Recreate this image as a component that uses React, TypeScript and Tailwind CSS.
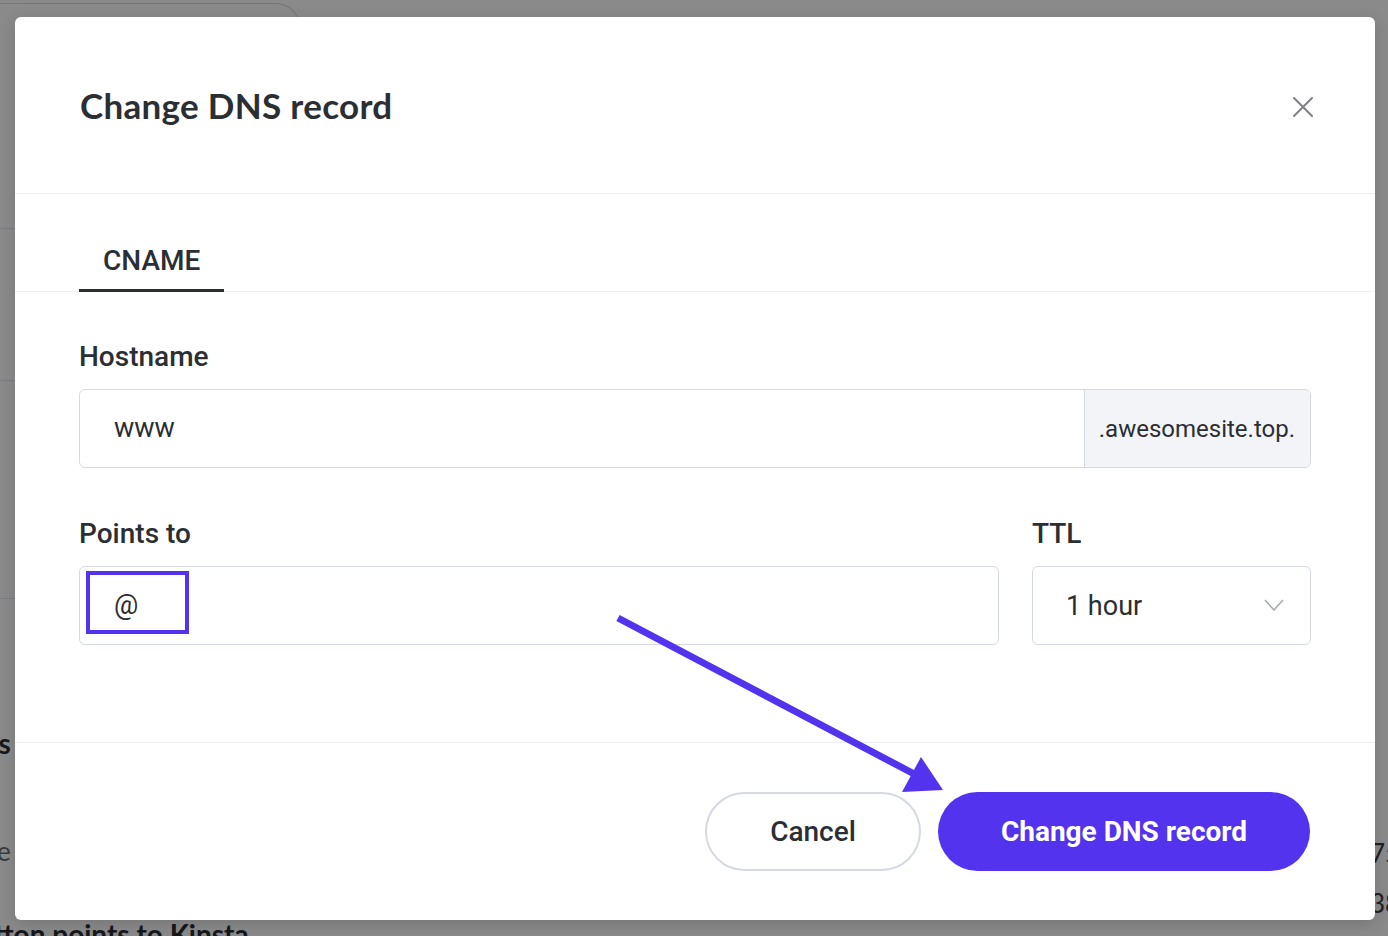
import React from 'react';

const body = { fontFamily: 'Roboto, "Liberation Sans", sans-serif' };
const heading = { fontFamily: 'Lato, "Liberation Sans", sans-serif' };

const CloseIcon = () => (
  <svg width="20" height="20" viewBox="0 0 20 20" fill="none">
    <path d="M1 1L19 19M19 1L1 19" stroke="#7f8185" strokeWidth="2" strokeLinecap="round" />
  </svg>
);

const Chevron = () => (
  <svg width="20" height="12" viewBox="0 0 20 12" fill="none">
    <path d="M1 1L10 11L19 1" stroke="#a3a8b0" strokeWidth="1.5" />
  </svg>
);

// annotation arrow drawn over the dialog
const Arrow = () => (
  <svg className="pointer-events-none absolute left-0 top-0" width="1388" height="936" viewBox="0 0 1388 936">
    <line x1="618" y1="618" x2="918" y2="776" stroke="#5333ed" strokeWidth="7" />
    <polygon points="921,757 943,790 902,792" fill="#5333ed" />
  </svg>
);

const Backdrop = () => (
  <div className="absolute inset-0 bg-white text-[#2b2e33]" style={heading}>
    <div className="absolute left-0 top-[3px] h-[80px] w-[300px] rounded-tr-[24px] border-r border-t border-[#d8dbe0]" />
    <div className="absolute left-0 top-[228px] h-px w-[40px] bg-[#e6e8ec]" />
    <div className="absolute left-0 top-[380px] h-px w-[40px] bg-[#e6e8ec]" />
    <div className="absolute left-0 top-[598px] h-px w-[40px] bg-[#e6e8ec]" />
    <div className="absolute left-[-12px] top-[722px] text-[28px] font-bold">rs</div>
    <div className="absolute left-[-3px] top-[832px] text-[26px] text-[#6b6f76]">e</div>
    <div className="absolute left-[-6px] top-[913px] text-[28px] font-bold">tton points to Kinsta</div>
    <div className="absolute left-[1370px] top-[834px] text-[26px] text-[#3b3e44]">75</div>
    <div className="absolute left-[1370px] top-[884px] text-[26px] text-[#3b3e44]">38</div>
  </div>
);

const Label = ({ children }: { children: React.ReactNode }) => (
  <div className="mb-4 h-8 text-[28px] font-medium leading-8 text-[#2b2e33]">{children}</div>
);

const App = () => {
  return (
    <div className="relative h-[936px] w-[1388px] overflow-hidden" style={body}>
      <Backdrop />
      <div className="absolute inset-0 bg-black/[0.46]">
        <div className="ml-[15px] mt-[17px] flex h-[903px] w-[1360px] flex-col rounded-[6px] bg-white shadow-[0_4px_16px_rgba(0,0,0,0.15)]">
          <div className="flex h-[177px] shrink-0 items-center justify-between border-b border-[#eeeff2] pl-[65px] pr-[56px]">
            <h2 className="text-[35px] font-bold tracking-[0.3px] text-[#2b2e33]" style={heading}>
              Change DNS record
            </h2>
            <button className="mt-1 flex h-8 w-8 items-center justify-center">
              <CloseIcon />
            </button>
          </div>

          <div className="flex h-[98px] shrink-0 items-end border-b border-[#eeeff2] px-[64px]">
            <div className="-mb-px border-b-[3px] border-[#2b2e33] px-6 pb-[13px] text-[28px] font-medium leading-[30px] text-[#2b2e33]">
              CNAME
            </div>
          </div>

          <div className="shrink-0 border-b border-[#eeeff2] px-[64px] pb-[97px] pt-[49px]">
            <Label>Hostname</Label>
            <div className="flex h-[79px] overflow-hidden rounded-[6px] border border-[#d5d9e1]">
              <div className="flex flex-1 items-center px-[34px] text-[27px] text-[#2b2e33]">www</div>
              <div className="flex w-[226px] items-center justify-end border-l border-[#d5d9e1] bg-[#f3f4f8] px-[15px] text-[24px] text-[#2b2e33]">
                .awesomesite.top.
              </div>
            </div>

            <div className="mt-[50px] flex gap-[33px]">
              <div className="flex-1">
                <Label>Points to</Label>
                <div className="relative flex h-[79px] items-center rounded-[6px] border border-[#d5d9e1] px-[34px] text-[27px] text-[#2b2e33]">
                  @
                  <div className="absolute left-[6px] top-[4px] h-[63px] w-[103px] border-4 border-[#5333ed]" />
                </div>
              </div>
              <div className="w-[279px]">
                <Label>TTL</Label>
                <div className="flex h-[79px] items-center justify-between rounded-[6px] border border-[#d5d9e1] pb-[2px] pl-[33px] pr-[26px] text-[27px] text-[#2b2e33]">
                  <span className="mt-[4px]">1 hour</span>
                  <Chevron />
                </div>
              </div>
            </div>
          </div>

          <div className="flex justify-end gap-[17px] px-[65px] pb-[49px] pt-[49px]">
            <button className="h-[79px] w-[216px] rounded-full border-2 border-[#d5d9e1] bg-white text-[28px] font-medium text-[#2b2e33]">
              Cancel
            </button>
            <button className="h-[79px] w-[372px] rounded-full bg-[#5333ed] text-[28px] font-bold text-white">
              Change DNS record
            </button>
          </div>
        </div>
        <Arrow />
      </div>
    </div>
  );
};

export default App;
